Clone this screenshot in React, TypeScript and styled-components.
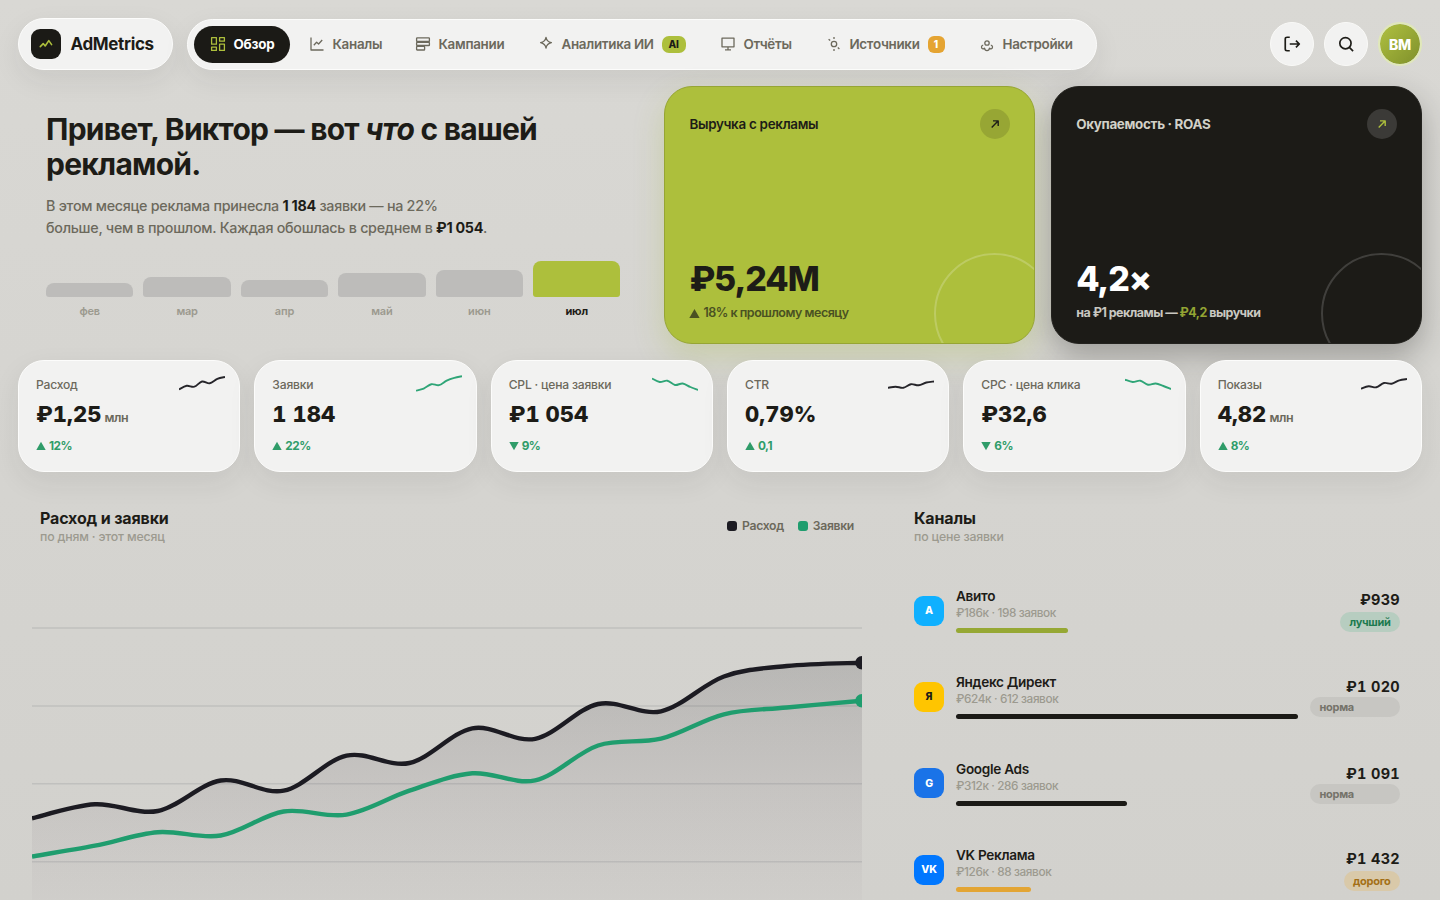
import React from "react";
import styled, { createGlobalStyle, css } from "styled-components";

const ink = "#1d1c17";
const muted = "#6c695c";
const faint = "#9c9a8f";
const lime = "#adbf3c";
const green = "#1f9d6e";

const Global = createGlobalStyle`
  * { box-sizing: border-box; }
  body { margin: 0; background: #d4d3cf; font-family: Inter, "Liberation Sans", sans-serif; color: ${ink}; }
  h1, h2, p { margin: 0; }
`;

const Page = styled.div`
  height: 900px;
  overflow: hidden;
  padding: 18px 18px 0;
  background: linear-gradient(180deg, #d9d8d4 0%, #d6d5d1 40%, #d2d1cd 100%);
  display: flex;
  flex-direction: column;
`;

const glass = css`
  background: #f2f2f1;
  border: 1.5px solid #fcfcfb;
  box-shadow: 0 10px 28px rgba(40, 40, 35, 0.08);
`;

const Header = styled.header`
  display: flex;
  align-items: center;
  height: 52px;
`;

const Brand = styled.div`
  ${glass}
  width: 155px;
  height: 52px;
  border-radius: 26px;
  display: flex;
  align-items: center;
  gap: 10px;
  padding-left: 11.5px;
  font-size: 17px;
  font-weight: 700;
  letter-spacing: -0.35px;
`;

const BrandMark = styled.span`
  width: 30px;
  height: 30px;
  border-radius: 9px;
  background: #1b1a16;
  display: grid;
  place-items: center;
`;

const Nav = styled.nav`
  ${glass}
  margin: 1px 0 0 14px;
  width: 910px;
  height: 51px;
  border-radius: 26px;
  padding: 0 5.5px;
  display: flex;
  align-items: center;
`;

const NavItem = styled.a<{ $w: number; $active?: boolean }>`
  width: ${(p) => p.$w}px;
  height: 37px;
  flex: none;
  border-radius: 19px;
  padding: 0 0 1px 16px;
  margin-right: ${(p) => (p.$active ? 3 : 0)}px;
  display: flex;
  align-items: center;
  gap: 8px;
  white-space: nowrap;
  font-size: 13.4px;
  font-weight: ${(p) => (p.$active ? 700 : 600)};
  letter-spacing: ${(p) => (p.$active ? -0.2 : -0.3)}px;
  color: ${(p) => (p.$active ? "#fff" : muted)};
  background: ${(p) => (p.$active ? "#1b1a16" : "transparent")};
  svg { color: ${(p) => (p.$active ? lime : muted)}; flex: none; }
`;

const Tag = styled.span<{ $warn?: boolean }>`
  height: 17px;
  min-width: ${(p) => (p.$warn ? 17 : 24)}px;
  border-radius: ${(p) => (p.$warn ? 6 : 7)}px;
  display: grid;
  place-items: center;
  font-size: 10px;
  font-weight: 800;
  letter-spacing: 0;
  color: ${(p) => (p.$warn ? "#fff" : ink)};
  background: ${(p) => (p.$warn ? "#e5a432" : lime)};
`;

const Actions = styled.div`
  margin-left: auto;
  display: flex;
  gap: 10px;
`;

const RoundButton = styled.button`
  width: 44px;
  height: 44px;
  padding: 0;
  border-radius: 50%;
  border: 1.5px solid #fafaf8;
  background: #f2f2f1;
  color: ${ink};
  display: grid;
  place-items: center;
`;

const Avatar = styled.div`
  width: 44px;
  height: 44px;
  border-radius: 50%;
  border: 2px solid #e0e8b9;
  background: linear-gradient(135deg, #b0c140, #7f902b);
  background-clip: padding-box;
  color: #fff;
  display: grid;
  place-items: center;
  font-size: 14px;
  font-weight: 800;
  letter-spacing: -0.3px;
`;

const Hero = styled.section`
  margin-top: 16px;
  height: 258px;
  display: grid;
  grid-template-columns: 1.7fr 1fr 1fr;
  gap: 16px;
`;

const Intro = styled.div`
  padding: 26px 28px 0;
  display: flex;
  flex-direction: column;
`;

const Title = styled.h1`
  font-size: 30px;
  line-height: 35px;
  font-weight: 700;
  letter-spacing: -0.75px;
  white-space: nowrap;
`;

const Lead = styled.p`
  margin-top: 13px;
  font-size: 14.3px;
  line-height: 22px;
  font-weight: 500;
  letter-spacing: -0.27px;
  color: ${muted};
  white-space: nowrap;
  b { color: ${ink}; font-weight: 700; }
`;

const Months = styled.div`
  margin-top: 21px;
  display: grid;
  grid-template-columns: repeat(6, 1fr);
  gap: 10px;
`;

const Month = styled.div<{ $on?: boolean }>`
  height: 58px;
  display: flex;
  flex-direction: column;
  justify-content: flex-end;
  text-align: center;
  font-size: 11px;
  line-height: 14px;
  font-weight: ${(p) => (p.$on ? 700 : 600)};
  letter-spacing: -0.2px;
  color: ${(p) => (p.$on ? ink : faint)};
`;

const MonthBar = styled.span<{ $h: number; $on?: boolean }>`
  height: ${(p) => p.$h}px;
  margin-bottom: 7px;
  border-radius: 8px 8px 3px 3px;
  background: ${(p) => (p.$on ? lime : "#bdbcba")};
`;

const BigCard = styled.article<{ $dark?: boolean }>`
  position: relative;
  overflow: hidden;
  height: 258px;
  border-radius: 28px;
  padding: 22px 24px 21px;
  display: flex;
  flex-direction: column;
  color: ${(p) => (p.$dark ? "#fff" : ink)};
  background: ${(p) => (p.$dark ? "#1c1b17" : lime)};
  border: 1px solid ${(p) => (p.$dark ? "#23221e" : "#96a534")};
`;

const CardShadow = styled.div<{ $dark?: boolean }>`
  border-radius: 28px;
  box-shadow: ${(p) =>
    p.$dark ? "0 12px 30px rgba(30,30,26,.3)" : "0 12px 30px rgba(160,180,50,.26)"};
`;

const Ring = styled.span<{ $dark?: boolean }>`
  position: absolute;
  right: -21px;
  bottom: -31px;
  width: 121px;
  height: 121px;
  border-radius: 50%;
  border: 2px solid ${(p) => (p.$dark ? "rgba(255,255,255,.16)" : "rgba(255,255,255,.2)")};
`;

const CardTop = styled.div<{ $dark?: boolean }>`
  display: flex;
  justify-content: space-between;
  align-items: center;
  font-size: 13.4px;
  font-weight: ${(p) => (p.$dark ? 700 : 600)};
  letter-spacing: ${(p) => (p.$dark ? -0.32 : -0.28)}px;
  color: ${(p) => (p.$dark ? "#d2d1c8" : ink)};
`;

const ArrowDot = styled.span<{ $dark?: boolean }>`
  width: 30px;
  height: 30px;
  border-radius: 50%;
  display: grid;
  place-items: center;
  background: ${(p) => (p.$dark ? "#3b3a37" : "#97a634")};
  color: ${(p) => (p.$dark ? lime : ink)};
`;

const BigValue = styled.div`
  margin-top: auto;
  font-size: 34px;
  line-height: 40px;
  font-weight: 800;
  letter-spacing: -1.1px;
`;

const BigNote = styled.div<{ $dark?: boolean }>`
  margin-top: 5px;
  font-size: 12.5px;
  line-height: 18px;
  font-weight: ${(p) => (p.$dark ? 700 : 600)};
  letter-spacing: ${(p) => (p.$dark ? -0.52 : -0.48)}px;
  color: ${(p) => (p.$dark ? "#c9c8c1" : "#4a5122")};
  display: flex;
  align-items: center;
  gap: 3px;
  white-space: pre;
  b { font-weight: 700; color: #93a433; }
`;

const Kpis = styled.section`
  margin-top: 16px;
  display: grid;
  grid-template-columns: repeat(6, 1fr);
  gap: 14px;
`;

const Kpi = styled.article`
  ${glass}
  height: 112px;
  border-radius: 26px;
  padding: 12.5px 14px 0 17px;
`;

const KpiTop = styled.div`
  height: 22px;
  display: flex;
  justify-content: space-between;
  align-items: center;
  font-size: 12.1px;
  font-weight: 500;
  letter-spacing: -0.2px;
  color: ${muted};
  svg { margin-bottom: 1px; }
`;

const KpiValue = styled.div`
  margin-top: 4px;
  height: 28px;
  line-height: 28px;
  font-size: 22px;
  font-weight: 800;
  letter-spacing: 0.05px;
  font-feature-settings: "tnum";
  white-space: nowrap;
  small { font-size: 12.5px; font-weight: 600; color: ${muted}; margin-left: 3px; letter-spacing: -0.4px; }
`;

const Delta = styled.div`
  margin-top: 10px;
  display: flex;
  align-items: center;
  gap: 3px;
  height: 16px;
  font-size: 11.8px;
  font-weight: 700;
  letter-spacing: -0.5px;
  color: #2f9c69;
`;

const Lower = styled.section`
  margin-top: 14px;
  display: grid;
  grid-template-columns: 858px 530px;
  gap: 16px;
`;

const Panel = styled.article`
  height: 414px;
  padding: 22px 22px 0;
  display: flex;
  flex-direction: column;
`;

const PanelHead = styled.div`
  height: 38px;
  display: flex;
  align-items: flex-start;
  justify-content: space-between;
`;

const PanelTitle = styled.h2`
  font-size: 16px;
  line-height: 21px;
  font-weight: 700;
  letter-spacing: -0.15px;
`;

const PanelSub = styled.p`
  font-size: 12.3px;
  line-height: 16px;
  font-weight: 500;
  letter-spacing: -0.17px;
  color: ${faint};
`;

const Legend = styled.div`
  display: flex;
  gap: 14px;
  margin-top: 10px;
  font-size: 12.2px;
  line-height: 16px;
  font-weight: 600;
  letter-spacing: -0.32px;
  color: ${muted};
`;

const LegendItem = styled.span<{ $c: string }>`
  display: flex;
  align-items: center;
  gap: 5px;
  &::before { content: ""; width: 10px; height: 10px; border-radius: 3px; background: ${(p) => p.$c}; }
`;

const ChartBox = styled.div`
  margin: 14px -8px 0;
  height: 340px;
  overflow: hidden;
  svg { display: block; }
`;

const Channels = styled.div`
  margin-top: 42px;
  display: grid;
  grid-auto-rows: 86.4px;
`;

const Channel = styled.div`
  height: 46px;
  display: grid;
  grid-template-columns: 30px 342px 90px;
  gap: 12px;
  align-items: center;
`;

const ChannelIcon = styled.span<{ $bg: string; $fg?: string }>`
  width: 30px;
  height: 30px;
  border-radius: 9px;
  display: grid;
  place-items: center;
  margin-top: 1px;
  font-size: 10.5px;
  font-weight: 800;
  letter-spacing: -0.2px;
  background: ${(p) => p.$bg};
  color: ${(p) => p.$fg ?? "#fff"};
`;

const ChannelName = styled.div`
  padding-top: 1px;
  font-size: 13.6px;
  line-height: 17px;
  font-weight: 600;
  letter-spacing: -0.3px;
`;

const ChannelSub = styled.div`
  font-size: 11.8px;
  line-height: 16px;
  font-weight: 500;
  letter-spacing: -0.4px;
  color: ${faint};
`;

const Meter = styled.div<{ $w: number; $c: string }>`
  margin-top: 7px;
  width: ${(p) => p.$w}px;
  height: 5px;
  border-radius: 3px;
  background: ${(p) => p.$c};
`;

const PriceCol = styled.div`
  display: flex;
  flex-direction: column;
  align-items: flex-end;
`;

const Price = styled.div`
  font-size: 14.5px;
  line-height: 20px;
  font-weight: 700;
  letter-spacing: 0.3px;
  font-feature-settings: "tnum";
  margin-top: 1.5px;
`;

const tones = {
  best: ["#b7cdc0", "#1d7b50"],
  norm: ["#c7c6c2", "#75736a"],
  high: ["#d9c9a9", "#a36f16"],
} as const;

const Badge = styled.span<{ $tone: keyof typeof tones }>`
  height: 20px;
  width: ${(p) => (p.$tone === "norm" ? "90px" : "auto")};
  padding: 0 9.5px;
  margin-top: ${(p) => (p.$tone === "norm" ? 0 : 2)}px;
  border-radius: 10px;
  font-size: 11px;
  line-height: 20px;
  font-weight: 700;
  letter-spacing: -0.3px;
  background: ${(p) => tones[p.$tone][0]};
  color: ${(p) => tones[p.$tone][1]};
`;

const Icon = ({ children, size = 16, sw = 1.3 }: { children: React.ReactNode; size?: number; sw?: number }) => (
  <svg width={size} height={size} viewBox="0 0 16 16" fill="none" stroke="currentColor" strokeWidth={sw} strokeLinejoin="round">
    {children}
  </svg>
);

const Triangle = ({ down, size = 10 }: { down?: boolean; size?: number }) => (
  <svg width={size} height={size} viewBox="0 0 10 10" fill="currentColor">
    <path d={down ? "M.3 1h9.4L5 9.2z" : "M.3 9h9.4L5 .8z"} />
  </svg>
);

const Arrow = () => (
  <Icon size={16} sw={1.4}>
    <path d="M4.7 11.4 11 5.1M6 4.9h5.2v5.2" />
  </Icon>
);

type Pt = [number, number];

/** Catmull-Rom spline through the points, as cubic segments. */
const smooth = (pts: Pt[]) =>
  pts.reduce((d, p, i) => {
    if (i === 0) return `M${p[0]} ${p[1]}`;
    const a = pts[i - 2] ?? pts[i - 1];
    const b = pts[i - 1];
    const n = pts[i + 1] ?? p;
    return `${d}C${b[0] + (p[0] - a[0]) / 6} ${b[1] + (p[1] - a[1]) / 6} ${p[0] - (n[0] - b[0]) / 6} ${
      p[1] - (n[1] - b[1]) / 6
    } ${p[0]} ${p[1]}`;
  }, "");

const spread = (ys: number[], width: number): Pt[] => ys.map((y, i) => [(i * width) / (ys.length - 1), y]);

/** Daily points sit on an even grid; today's point is pinned to the right edge. */
const series = (ys: number[]): Pt[] => ys.map((y, i) => [i === ys.length - 1 ? 830 : i * 62.9, y]);

const Spark = ({ ys, color }: { ys: number[]; color: string }) => (
  <svg width="46" height="20" viewBox="0 0 46 20" fill="none" stroke={color} strokeWidth="1.9">
    <path d={smooth(spread(ys, 46))} />
  </svg>
);

const spend = series([258.3, 244.3, 251, 220.5, 230.7, 195.7, 203, 168.3, 178.8, 144, 151.3, 116.5, 106, 102.7]);
const leads = series([296.5, 285.7, 272.2, 275.5, 251.5, 254.7, 230.7, 213.3, 220.3, 185.5, 178.7, 154.3, 147.5, 140.8]);

const Chart = () => (
  <svg width="830" height="340" viewBox="0 0 830 340" fill="none">
    <defs>
      <linearGradient id="area" x1="0" y1="102" x2="0" y2="378" gradientUnits="userSpaceOnUse">
        <stop offset="0" stopColor="#1c1b22" stopOpacity=".15" />
        <stop offset="1" stopColor="#5a3a52" stopOpacity="0" />
      </linearGradient>
    </defs>
    {[68, 146, 223.8, 301.7].map((y) => (
      <path key={y} d={`M0 ${y}H830`} stroke="#c0c0be" strokeWidth="1.6" />
    ))}
    <path d={`${smooth(spend)}V380H0Z`} fill="url(#area)" />
    <path d={smooth(spend)} stroke="#1c1b22" strokeWidth="4.4" />
    <path d={smooth(leads)} stroke={green} strokeWidth="4.4" />
    <circle cx="830" cy="102.7" r="6.8" fill="#1c1b22" />
    <circle cx="830" cy="140.8" r="6.8" fill={green} />
  </svg>
);

const months = [
  ["фев", 14], ["мар", 20], ["апр", 17], ["май", 24], ["июн", 27], ["июл", 36],
] as const;

const kpis = [
  { label: "Расход", value: "₽1,25", unit: "млн", delta: "12%", ys: [15.5, 11.8, 12.7, 7.5, 9.3, 4.8, 3], dark: true },
  { label: "Заявки", value: "1 184", delta: "22%", ys: [16.7, 14.6, 10.2, 11.2, 6.6, 3.8, 2.3] },
  { label: "CPL · цена заявки", value: "₽1 054", delta: "9%", down: true, ys: [4.5, 8, 6.7, 11, 9.5, 13, 16] },
  { label: "CTR", value: "0,79%", delta: "0,1", ys: [13.7, 12.7, 13.8, 10.2, 11.3, 8.5, 7.5], dark: true },
  { label: "CPC · цена клика", value: "₽32,6", delta: "6%", down: true, ys: [5.7, 8, 6.7, 10.7, 9.5, 12, 15] },
  { label: "Показы", value: "4,82", unit: "млн", delta: "8%", ys: [14.7, 12.2, 13.3, 9, 9.7, 6.3, 5], dark: true },
];

const channels = [
  { name: "Авито", mark: "A", bg: "#0fb0ff", sub: "₽186к · 198 заявок", w: 112, c: "#96a834", price: "₽939", tone: "best", note: "лучший" },
  { name: "Яндекс Директ", mark: "Я", bg: "#ffc500", fg: ink, sub: "₽624к · 612 заявок", w: 342, c: "#1b1a16", price: "₽1 020", tone: "norm", note: "норма" },
  { name: "Google Ads", mark: "G", bg: "#1a73e8", sub: "₽312к · 286 заявок", w: 171, c: "#1b1a16", price: "₽1 091", tone: "norm", note: "норма" },
  { name: "VK Реклама", mark: "VK", bg: "#0077ff", sub: "₽126к · 88 заявок", w: 75, c: "#e3a534", price: "₽1 432", tone: "high", note: "дорого" },
] as const;

export default function App() {
  return (
    <Page>
      <Global />
      <Header>
        <Brand>
          <BrandMark>
            <svg width="14" height="10" viewBox="0 0 14 10" fill="none" stroke={lime} strokeWidth="1.6" strokeLinejoin="round" strokeLinecap="round">
              <path d="M1.3 7.6 4.2 4.6 6.2 7 9.8 1.6 12.6 5.6" />
            </svg>
          </BrandMark>
          AdMetrics
        </Brand>
        <Nav>
          <NavItem $w={96} $active>
            <Icon>
              <path d="M1.6 1.6h4.8v6.6H1.6zM9.6 1.6h4.8v3.6H9.6zM1.6 11.2h4.8v3.2H1.6zM9.6 8.2h4.8v6.2H9.6z" />
            </Icon>
            Обзор
          </NavItem>
          <NavItem $w={106}>
            <Icon>
              <path d="M2 1.5V14h12.5M4.8 9.2l2.8-3 2 1.8 3.6-4" />
            </Icon>
            Каналы
          </NavItem>
          <NavItem $w={123}>
            <Icon>
              <rect x="1.6" y="1.9" width="12.8" height="3.6" rx=".6" />
              <rect x="1.6" y="6.3" width="12.8" height="3.2" rx=".6" />
              <rect x="1.6" y="10.4" width="8" height="3.6" rx=".6" />
            </Icon>
            Кампании
          </NavItem>
          <NavItem $w={182}>
            <Icon>
              <path d="M8 1.3c.6 3.3 1.9 4.6 5.4 5.4C9.9 7.5 8.6 8.8 8 12.1 7.4 8.8 6.1 7.5 2.6 6.700 6.1 5.9 7.4 4.6 8 1.3z" />
            </Icon>
            Аналитика ИИ
            <Tag>AI</Tag>
          </NavItem>
          <NavItem $w={106}>
            <Icon>
              <path d="M2 2.2h12v8.6H2zM8 10.8v3M5 13.9h6" />
            </Icon>
            Отчёты
          </NavItem>
          <NavItem $w={153}>
            <Icon>
              <circle cx="8" cy="8" r="2.7" />
              <path d="M8 1v2M8 13v2M2.600 3.2l1.6 1.4M11.8 11.6l1.6 1.4" />
            </Icon>
            Источники
            <Tag $warn>1</Tag>
          </NavItem>
          <NavItem $w={120}>
            <Icon>
              <circle cx="8" cy="7" r="2.2" />
              <path d="M4.2 9.2c-2 .2-2.4 3.2-.4 3.6 1 .2 1.7-.6 1.7-.6s.4 2.500 2.500 2.500 2.500-2.500 2.500-2.500.7.8 1.700.6c2-.4 1.600-3.400-.4-3.600" />
            </Icon>
            Настройки
          </NavItem>
        </Nav>
        <Actions>
          <RoundButton aria-label="Выйти">
            <Icon size={18} sw={1.5}>
              <path d="M6 2H3.6c-.9 0-1.6.6-1.6 1.5v9c0 .9.7 1.5 1.6 1.5H6M6 8h8.5M11.5 5l3 3-3 3" />
            </Icon>
          </RoundButton>
          <RoundButton aria-label="Поиск">
            <Icon size={18} sw={1.5}>
              <circle cx="7.5" cy="7.3" r="5" />
              <path d="m11 11 3.3 3.3" />
            </Icon>
          </RoundButton>
          <Avatar>ВМ</Avatar>
        </Actions>
      </Header>

      <Hero>
        <Intro>
          <Title>
            Привет, Виктор — вот <em>что</em> с вашей
            <br />
            рекламой.
          </Title>
          <Lead>
            В этом месяце реклама принесла <b>1 184</b> заявки — на 22%
            <br />
            больше, чем в прошлом. Каждая обошлась в среднем в <b>₽1 054</b>.
          </Lead>
          <Months>
            {months.map(([m, h]) => (
              <Month key={m} $on={m === "июл"}>
                <MonthBar $h={h} $on={m === "июл"} />
                {m}
              </Month>
            ))}
          </Months>
        </Intro>
        <CardShadow>
          <BigCard>
            <Ring />
            <CardTop>
              Выручка с рекламы
              <ArrowDot><Arrow /></ArrowDot>
            </CardTop>
            <BigValue>₽5,24M</BigValue>
            <BigNote>
              <Triangle size={11} />
              18% к прошлому месяцу
            </BigNote>
          </BigCard>
        </CardShadow>
        <CardShadow $dark>
          <BigCard $dark>
            <Ring $dark />
            <CardTop $dark>
              Окупаемость · ROAS
              <ArrowDot $dark><Arrow /></ArrowDot>
            </CardTop>
            <BigValue>4,2×</BigValue>
            <BigNote $dark>
              <span>на ₽1 рекламы — <b>₽4,2</b> выручки</span>
            </BigNote>
          </BigCard>
        </CardShadow>
      </Hero>

      <Kpis>
        {kpis.map((k) => (
          <Kpi key={k.label}>
            <KpiTop>
              {k.label}
              <Spark ys={k.ys} color={k.dark ? "#26252a" : "#2fa577"} />
            </KpiTop>
            <KpiValue>
              {k.value}
              {k.unit && <small>{k.unit}</small>}
            </KpiValue>
            <Delta>
              <Triangle down={k.down} />
              {k.delta}
            </Delta>
          </Kpi>
        ))}
      </Kpis>

      <Lower>
        <Panel>
          <PanelHead>
            <div>
              <PanelTitle>Расход и заявки</PanelTitle>
              <PanelSub>по дням · этот месяц</PanelSub>
            </div>
            <Legend>
              <LegendItem $c="#1c1b22">Расход</LegendItem>
              <LegendItem $c={green}>Заявки</LegendItem>
            </Legend>
          </PanelHead>
          <ChartBox>
            <Chart />
          </ChartBox>
        </Panel>
        <Panel>
          <PanelHead>
            <div>
              <PanelTitle>Каналы</PanelTitle>
              <PanelSub>по цене заявки</PanelSub>
            </div>
          </PanelHead>
          <Channels>
            {channels.map((c) => (
              <Channel key={c.name}>
                <ChannelIcon $bg={c.bg} $fg={"fg" in c ? c.fg : undefined}>{c.mark}</ChannelIcon>
                <div>
                  <ChannelName>{c.name}</ChannelName>
                  <ChannelSub>{c.sub}</ChannelSub>
                  <Meter $w={c.w} $c={c.c} />
                </div>
                <PriceCol>
                  <Price>{c.price}</Price>
                  <Badge $tone={c.tone}>{c.note}</Badge>
                </PriceCol>
              </Channel>
            ))}
          </Channels>
        </Panel>
      </Lower>
    </Page>
  );
}
